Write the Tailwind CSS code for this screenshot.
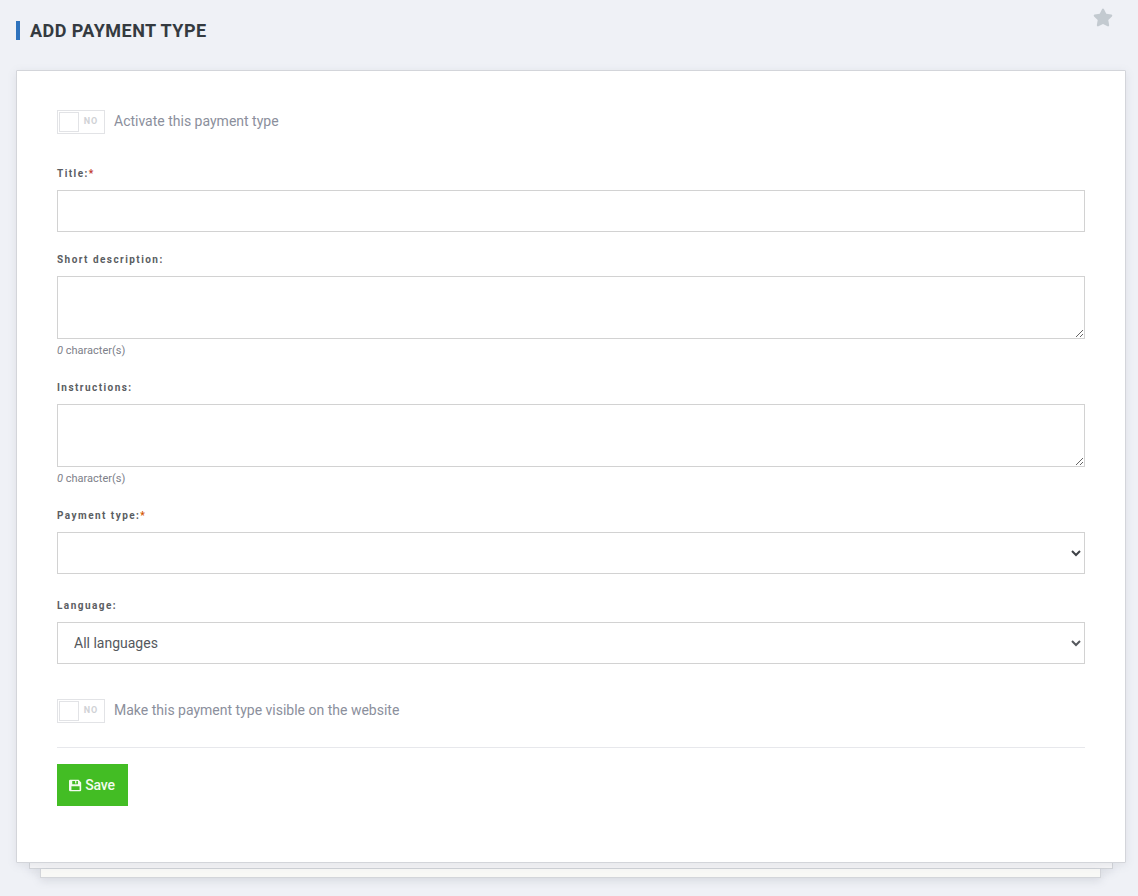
<!DOCTYPE html>
<html lang="en">
<head>
    <meta charset="UTF-8">
    <title>Add payment type</title>
    <script src="https://cdn.jsdelivr.net/npm/@tailwindcss/browser@4"></script>
</head>
<body class="bg-[#eff1f6] font-['Roboto',sans-serif] text-[#3e4247] min-h-screen">
    <div class="px-4">
        <!-- Header -->
        <div class="h-[70px] flex items-start justify-between">
            <h1 class="mt-[21px] border-l-4 border-[#2f73bd] pl-[10px] text-[18px] leading-[19px] font-bold uppercase tracking-[0.45px] text-[#343a40]">Add payment type</h1>
            <svg class="mt-[8px] mr-[13px] w-[20px] h-[19px] text-[#c3cad0] translate-x-[4px]" viewBox="0 0 576 512" fill="currentColor"><path d="M259.3 17.8L194 150.2 47.9 171.5c-26.2 3.8-36.7 36.1-17.7 54.6l105.7 103-25 145.5c-4.5 26.3 23.2 46 46.4 33.7L288 439.6l130.7 68.7c23.2 12.2 50.9-7.4 46.4-33.7l-25-145.5 105.7-103c19-18.5 8.5-50.8-17.7-54.6L382 150.2 316.7 17.8c-11.7-23.6-45.6-23.9-57.4 0z"/></svg>
        </div>

        <!-- Card -->
        <div class="relative bg-white border border-[#d3d5da] rounded-[1px] px-10 pt-[39px] pb-[56px] h-[793px] w-[1110px] shadow-[0_2px_8px_rgba(120,125,140,0.15)]">
            <div class="flex items-center gap-[9px] h-[24px]">
                <div class="flex items-center w-[48px] h-[24px] border border-[#e2e3e6] p-[1px]">
                    <span class="w-[20px] h-[20px] border border-[#e2e3e6] bg-white"></span>
                    <span class="flex-1 text-center text-[9px] font-bold tracking-[1px] text-[#d0d2d6]">NO</span>
                </div>
                <span class="text-[14px] pb-[2px] text-[#8b8f9c]">Activate this payment type</span>
            </div>

            <label class="block mt-[33px] h-[13px] text-[10px] leading-[13px] font-bold tracking-[1.45px] text-[#5a5d62]">Title:<span class="text-[#c0392b]">*</span></label>
            <input type="text" class="block mt-[10px] w-full h-[42px] bg-white border border-[#d2d2d2]">

            <label class="block mt-[21px] h-[13px] text-[10px] leading-[13px] font-bold tracking-[1.45px] text-[#5a5d62]">Short description:</label>
            <textarea class="block mt-[10px] w-full h-[63px] bg-white border border-[#d2d2d2]"></textarea>
            <p class="mt-[5px] h-[13px] text-[11px] leading-[13px] text-[#7d8089]"><i>0</i> character(s)</p>

            <label class="block mt-[24px] h-[13px] text-[10px] leading-[13px] font-bold tracking-[1.45px] text-[#5a5d62]">Instructions:</label>
            <textarea class="block mt-[10px] w-full h-[63px] bg-white border border-[#d2d2d2]"></textarea>
            <p class="mt-[5px] h-[13px] text-[11px] leading-[13px] text-[#7d8089]"><i>0</i> character(s)</p>

            <label class="block mt-[24px] h-[13px] text-[10px] leading-[13px] font-bold tracking-[1.45px] text-[#5a5d62]">Payment type:<span class="text-[#d35400]">*</span></label>
            <select class="block mt-[10px] w-full h-[42px] pl-3 pr-[13px] bg-white border border-[#d2d2d2] text-[14px]"><option></option></select>

            <label class="block mt-[25px] h-[13px] text-[10px] leading-[13px] font-bold tracking-[1.45px] text-[#5a5d62]">Language:</label>
            <select class="block mt-[10px] w-full h-[42px] pl-3 pr-[13px] bg-white border border-[#d2d2d2] text-[14px] text-[#55585d]"><option>All languages</option></select>

            <div class="flex items-center gap-[9px] h-[24px] mt-[35px]">
                <div class="flex items-center w-[48px] h-[24px] border border-[#e2e3e6] p-[1px]">
                    <span class="w-[20px] h-[20px] border border-[#e2e3e6] bg-white"></span>
                    <span class="flex-1 text-center text-[9px] font-bold tracking-[1px] text-[#d0d2d6]">NO</span>
                </div>
                <span class="text-[14px] pb-[2px] text-[#8b8f9c]">Make this payment type visible on the website</span>
            </div>

            <hr class="mt-[24px] border-[#e7e8ec]">

            <button class="mt-[16px] flex items-center justify-center gap-[3px] w-[71px] h-[42px] pr-[1px] bg-[#43bd24] text-[#f2fbef] text-[14px] font-medium tracking-[-0.2px]">
                <svg class="w-[13px] h-[13px]" viewBox="0 0 16 16" fill="currentColor" fill-rule="evenodd"><path d="M1.5 1h10.3L15 4.2v9.3a1.5 1.5 0 0 1-1.5 1.5h-12A1.5 1.5 0 0 1 0 13.500v-11A1.500 1.500 0 0 1 1.500 1zM4 2.500V6.500h7V2.500H9V5.500H7.500V2.500zM3 9v4.500h10V9z"/></svg>
                Save
            </button>
        </div>

        <!-- Stacked sheets under the card -->
        <div class="mx-[13px] w-[1084px] h-[6px] bg-[#f7f7f9] border border-t-0 border-[#d3d5da] shadow-[0_3px_8px_rgba(120,125,140,0.2)]"></div>
        <div class="mx-[24px] w-[1061px] h-[9px] bg-[#f8f8f6] border border-t-0 border-[#d3d5da] shadow-[0_3px_8px_rgba(120,125,140,0.2)]"></div>
    </div>
</body>
</html>
